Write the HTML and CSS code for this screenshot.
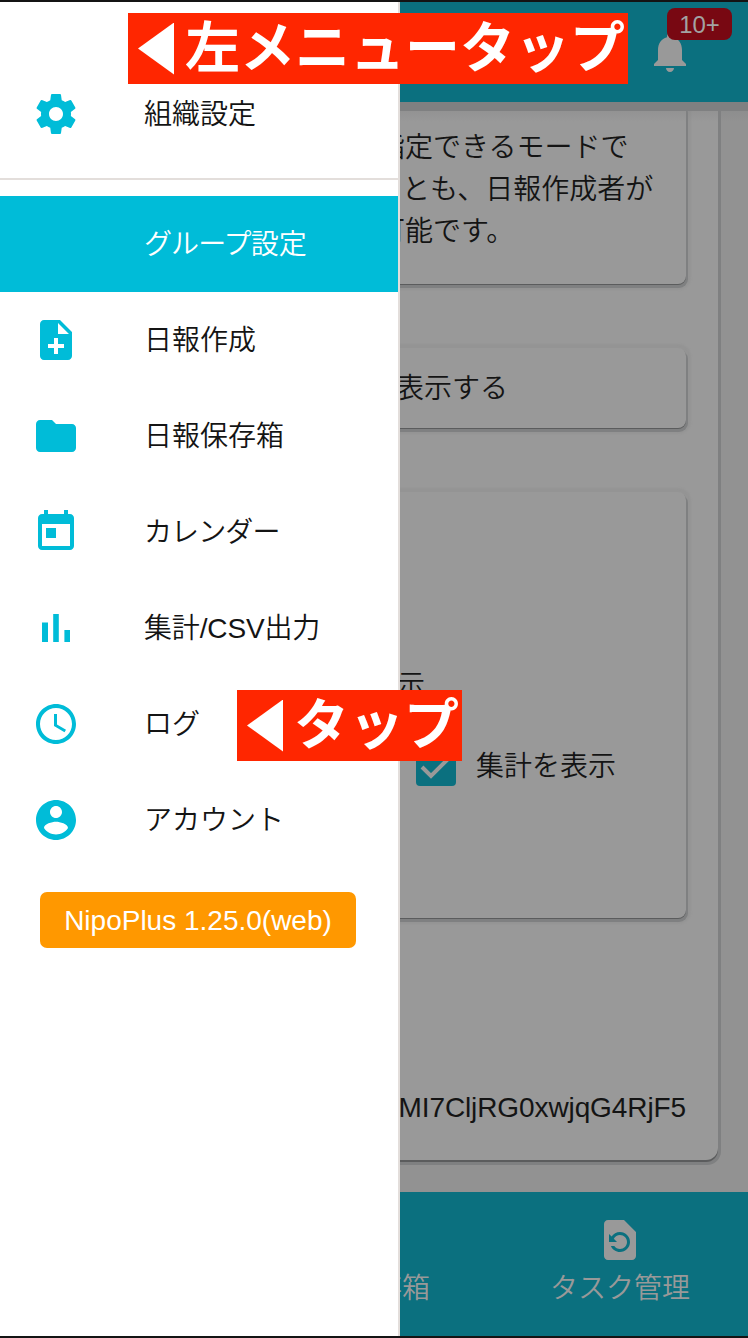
FILE: index.html
```html
<!DOCTYPE html>
<html lang="ja">
<head>
<meta charset="utf-8">
<title>NipoPlus</title>
<link rel="stylesheet" href="styles.css">
</head>
<body>
<div class="screen">
  <nav class="drawer">
    <div class="row row-first">
      <svg class="icon" viewBox="0 0 24 24"><path d="M19.43 12.98c.04-.32.07-.64.07-.98s-.03-.66-.07-.98l2.11-1.65c.19-.15.24-.42.12-.64l-2-3.46c-.12-.22-.39-.3-.61-.22l-2.49 1c-.52-.4-1.08-.73-1.69-.98l-.38-2.65C14.46 2.18 14.25 2 14 2h-4c-.25 0-.46.18-.49.42l-.38 2.65c-.61.25-1.17.59-1.69.98l-2.49-1c-.23-.09-.49 0-.61.22l-2 3.46c-.13.22-.07.49.12.64l2.11 1.65c-.04.32-.07.65-.07.98s.03.66.07.98l-2.11 1.65c-.19.15-.24.42-.12.64l2 3.46c.12.22.39.3.61.22l2.49-1c.52.4 1.08.73 1.69.98l.38 2.65c.03.24.24.42.49.42h4c.25 0 .46-.18.49-.42l.38-2.65c.61-.25 1.17-.59 1.69-.98l2.49 1c.23.09.49 0 .61-.22l2-3.46c.12-.22.07-.49-.12-.64l-2.11-1.65zM12 15.5c-1.93 0-3.5-1.57-3.5-3.5s1.57-3.5 3.5-3.5 3.5 1.57 3.5 3.5-1.57 3.5-3.5 3.5z"/></svg>
      <span class="label">組織設定</span>
    </div>
    <div class="divider"></div>
    <div class="row row-active"><span class="icon"></span><span class="label"><span class="kana">グループ</span>設定</span></div>
    <div class="row">
      <svg class="icon" viewBox="0 0 24 24"><path d="M14 2H6c-1.1 0-1.99.9-1.99 2L4 20c0 1.1.89 2 1.99 2H18c1.1 0 2-.9 2-2V8l-6-6zm2 14h-3v3h-2v-3H8v-2h3v-3h2v3h3v2zm-3-7V3.5L18.5 9H13z"/></svg>
      <span class="label">日報作成</span>
    </div>
    <div class="row">
      <svg class="icon" viewBox="0 0 24 24"><path d="M10 4H4c-1.1 0-1.99.9-1.99 2L2 18c0 1.1.9 2 2 2h16c1.1 0 2-.9 2-2V8c0-1.1-.9-2-2-2h-8l-2-2z"/></svg>
      <span class="label">日報保存箱</span>
    </div>
    <div class="row">
      <svg class="icon" viewBox="0 0 24 24"><path d="M19 3h-1V1h-2v2H8V1H6v2H5c-1.11 0-1.99.9-1.99 2L3 19c0 1.1.89 2 2 2h14c1.1 0 2-.9 2-2V5c0-1.1-.9-2-2-2zm0 16H5V8h14v11zM7 10h5v5H7z"/></svg>
      <span class="label kana">カレンダー</span>
    </div>
    <div class="row">
      <svg class="icon" viewBox="0 0 24 24"><path d="M5 9.2h3V19H5zM10.6 5h2.8v14h-2.8zm5.6 8H19v6h-2.8z"/></svg>
      <span class="label mixed">集計/CSV出力</span>
    </div>
    <div class="row">
      <svg class="icon" viewBox="0 0 24 24"><path d="M11.99 2C6.47 2 2 6.48 2 12s4.47 10 9.99 10C17.52 22 22 17.52 22 12S17.52 2 11.99 2zM12 20c-4.42 0-8-3.58-8-8s3.58-8 8-8 8 3.58 8 8-3.58 8-8 8zm.5-13H11v6l5.25 3.15.75-1.23-4.5-2.67z"/></svg>
      <span class="label">ログ</span>
    </div>
    <div class="row">
      <svg class="icon" viewBox="0 0 24 24"><path d="M12 2C6.48 2 2 6.48 2 12s4.48 10 10 10 10-4.48 10-10S17.52 2 12 2zm0 3c1.66 0 3 1.34 3 3s-1.34 3-3 3-3-1.34-3-3 1.34-3 3-3zm0 14.2c-2.5 0-4.71-1.28-6-3.22.03-1.99 4-3.08 6-3.08 1.99 0 5.97 1.09 6 3.08-1.29 1.94-3.5 3.22-6 3.22z"/></svg>
      <span class="label">アカウント</span>
    </div>
    <div class="version">NipoPlus 1.25.0(web)</div>
  </nav>

  <main class="page">
    <header class="topbar">
      <div class="bell">
        <svg class="icon-page" viewBox="0 0 24 24"><path d="M12 22c1.1 0 2-.9 2-2h-4c0 1.1.89 2 2 2zm6-6v-5c0-3.07-1.64-5.64-4.5-6.32V4c0-.83-.67-1.5-1.5-1.5s-1.5.67-1.5 1.5v.68C7.63 5.36 6 7.92 6 11v5l-2 2v1h16v-1l-2-2z"/></svg>
        <span class="badge">10+</span>
      </div>
    </header>
    <section class="content">
      <div class="panel">
        <div class="card card-text">
          <p>指定できるモードで</p>
          <p class="line-shift">とも、日報作成者が</p>
          <p>可能です。</p>
        </div>
        <div class="card card-single">表示する</div>
        <div class="card card-options">
          <div class="option-label">示</div>
          <div class="option">
            <svg class="checkbox" viewBox="0 0 40 40"><rect class="checkbox-box" width="40" height="40" rx="4"/><path class="checkbox-mark" d="M6 21l9 9 19-19"/></svg>
            <span>集計を表示</span>
          </div>
        </div>
        <div class="ident">MI7CljRG0xwjqG4RjF5</div>
      </div>
    </section>
    <footer class="tabs">
      <div class="tab-clipped">存箱</div>
      <div class="tab">
        <svg class="icon-page" viewBox="0 0 24 24"><path d="M14 2H6c-1.1 0-1.99.9-1.99 2L4 20c0 1.1.89 2 1.99 2H18c1.1 0 2-.9 2-2V8l-6-6zm-2 16c-2.05 0-3.81-1.24-4.58-3h1.71c.63.9 1.68 1.5 2.87 1.5 1.93 0 3.5-1.57 3.5-3.5S13.93 9.5 12 9.5c-1.35 0-2.52.78-3.1 1.9l1.6 1.6h-4V9l1.3 1.3C8.69 8.92 10.23 8 12 8c2.76 0 5 2.24 5 5s-2.24 5-5 5z"/></svg>
        <span>タスク管理</span>
      </div>
    </footer>
  </main>

  <div class="callout callout-menu"><i class="arrow"></i><b>左メニュータップ</b></div>
  <div class="callout callout-log"><i class="arrow"></i><b>タップ</b></div>
</div>
</body>
</html>
```
FILE: styles.css
```css
* { box-sizing: border-box; }

body {
  margin: 0;
  font-family: "Liberation Sans", "Noto Sans CJK JP", sans-serif;
  font-size: 28px;
  font-weight: 350;
  line-height: 42px;
  color: #141414;
}

p { margin: 0; }

.screen {
  position: relative;
  display: grid;
  grid-template-columns: 400px 348px;
  width: 748px;
  height: 1338px;
  border-top: 2px solid #141414;
  border-bottom: 2px solid #141414;
  overflow: hidden;
}

/* Navigation drawer */
.drawer {
  background: #fff;
  border-right: 2px solid #e3dedb;
}

.row {
  display: flex;
  align-items: center;
  gap: 64px;
  height: 96px;
  padding-left: 32px;
  white-space: nowrap;
}

.label { padding-top: 2px; }

.row-first { margin-top: 64px; }

.row-active {
  background: #00bcd8;
  color: #fff;
}

.divider {
  height: 2px;
  margin: 16px 0;
  background: #e3dedb;
}

.icon {
  flex: none;
  width: 48px;
  height: 48px;
  fill: #00bcd8;
}

.kana { letter-spacing: -.9px; }
.mixed { letter-spacing: -.15px; }

.version {
  width: 316px;
  height: 56px;
  margin: 24px 0 0 40px;
  border-radius: 7px;
  background: #ff9800;
  color: #fff;
  line-height: 57px;
  text-align: center;
}

/* Dimmed page behind the drawer */
.page {
  display: flex;
  flex-direction: column;
  min-width: 0;
  overflow: hidden;
  background: #929292;
}

.icon-page {
  display: block;
  width: 48px;
  height: 48px;
  fill: #999;
}

.topbar {
  flex: none;
  display: flex;
  justify-content: flex-end;
  height: 100px;
  padding: 26px 54px 0 0;
  background: #0b707f;
}

.bell { position: relative; height: 48px; }

.badge {
  position: absolute;
  left: 21px;
  top: -20px;
  width: 65px;
  height: 32px;
  border-radius: 8px;
  background: #780812;
  color: #a3a3a3;
  font-size: 24px;
  line-height: 33px;
  text-align: center;
}

.content {
  position: relative;
  flex: none;
  height: 1090px;
  overflow: hidden;
}

.content::before {
  content: "";
  position: absolute;
  z-index: 1;
  top: 0;
  left: 0;
  width: 100%;
  height: 20px;
  background: linear-gradient(#7f8081 9px, rgba(127, 128, 129, .25) 9px, rgba(127, 128, 129, 0));
}

.panel {
  width: 318px;
  height: 1058px;
  border-radius: 0 0 12px 0;
  background: #999;
  box-shadow: 0 2px 0 #5b5c5d, 1px 3px 0 2px #7f8081;
}

.card {
  width: 286px;
  margin-bottom: 64px;
  border-radius: 0 8px 8px 0;
  background: #999;
  box-shadow: 0 1px 0 #5b5c5d, 1px 3px 0 1px #7f8081, 0 1px 2px 5px #949494;
  white-space: nowrap;
}

.card-text {
  height: 182px;
  padding: 25px 0 0;
  text-indent: -23px;
}

.line-shift { text-indent: 2px; }

.card-single {
  height: 80px;
  line-height: 82px;
  text-indent: -4px;
}

.card-options {
  height: 426px;
  padding-top: 173px;
}

.option-label {
  height: 42px;
  text-indent: -3px;
}

.option {
  display: flex;
  align-items: center;
  gap: 20px;
  height: 42px;
  margin-top: 38px;
  padding-left: 16px;
}

.option span { padding-top: 2px; }

.checkbox { width: 40px; height: 40px; }
.checkbox-box { fill: #0b707f; }
.checkbox-mark { fill: none; stroke: #999; stroke-width: 4; }

.ident {
  width: 286px;
  margin-top: 169px;
  letter-spacing: -.1px;
  white-space: nowrap;
  direction: rtl;
}

.tabs {
  flex: none;
  display: flex;
  height: 144px;
  padding-top: 24px;
  background: #0b707f;
  color: #999;
}

.tab-clipped {
  flex: none;
  width: 92px;
  padding-top: 52px;
  margin-left: -26px;
  white-space: nowrap;
}

.tab {
  flex: none;
  display: flex;
  flex-direction: column;
  align-items: center;
  gap: 4px;
  width: 308px;
}

/* Red annotation labels */
.callout {
  position: absolute;
  display: flex;
  align-items: center;
  height: 71px;
  padding-left: 10px;
  background: #ff2600;
  color: #fff;
  font-size: 55px;
  line-height: 71px;
  white-space: nowrap;
}

.callout b { font-weight: 700; }

.callout-menu { left: 128px; top: 11px; width: 500px; }
.callout-log { left: 237px; top: 688px; width: 225px; }

.arrow {
  width: 36px;
  height: 52px;
  margin-right: 11px;
  background: #fff;
  clip-path: polygon(0 50%, 100% 0, 100% 100%);
}
```
